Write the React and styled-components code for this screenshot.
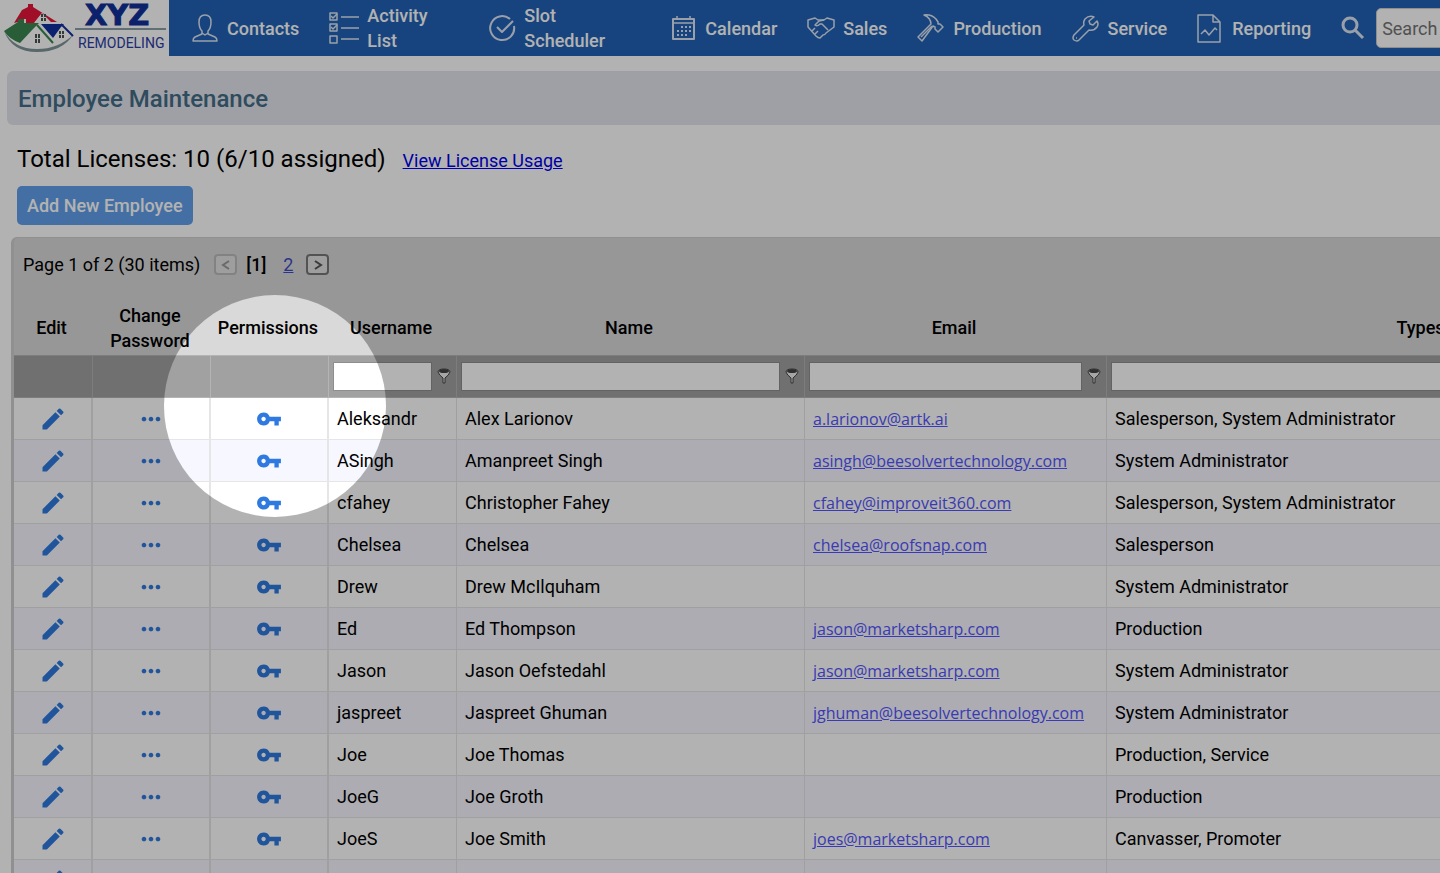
import React from 'react';
import styled, {createGlobalStyle} from 'styled-components';
//icons
import {MdEdit, MdMoreHoriz, MdVpnKey} from 'react-icons/md';

const employees = [
    {username: 'Aleksandr', name: 'Alex Larionov', email: 'a.larionov@artk.ai', types: 'Salesperson, System Administrator'},
    {username: 'ASingh', name: 'Amanpreet Singh', email: 'asingh@beesolvertechnology.com', types: 'System Administrator'},
    {username: 'cfahey', name: 'Christopher Fahey', email: 'cfahey@improveit360.com', types: 'Salesperson, System Administrator'},
    {username: 'Chelsea', name: 'Chelsea', email: 'chelsea@roofsnap.com', types: 'Salesperson'},
    {username: 'Drew', name: 'Drew McIlquham', email: '', types: 'System Administrator'},
    {username: 'Ed', name: 'Ed Thompson', email: 'jason@marketsharp.com', types: 'Production'},
    {username: 'Jason', name: 'Jason Oefstedahl', email: 'jason@marketsharp.com', types: 'System Administrator'},
    {username: 'jaspreet', name: 'Jaspreet Ghuman', email: 'jghuman@beesolvertechnology.com', types: 'System Administrator'},
    {username: 'Joe', name: 'Joe Thomas', email: '', types: 'Production, Service'},
    {username: 'JoeG', name: 'Joe Groth', email: '', types: 'Production'},
    {username: 'JoeS', name: 'Joe Smith', email: 'joes@marketsharp.com', types: 'Canvasser, Promoter'},
    {username: '', name: '', email: '', types: ''},
];

const columns = [
    {title: 'Edit', width: 79},
    {title: 'Change Password', width: 118},
    {title: 'Permissions', width: 118},
    {title: 'Username', width: 128, filter: true},
    {title: 'Name', width: 348, filter: true},
    {title: 'Email', width: 302, filter: true},
    {title: 'Types', filter: true},
];

const Logo = () => (
    <LogoLink href="#home" aria-label="XYZ Remodeling">
        <svg width="168" height="56" viewBox="0 0 168 56">
            <path d="M4 31 Q14 49 37 49 Q58 49 73 35 Q62 52 37 52 Q12 52 4 31Z" fill="#7f9599" />
            <path d="M14 23 L22 10 L28 7 V4 H33 V7 L57 22 H51 L42 13 L34 23 H26 V19 H18 V22Z" fill="#e6153a" />
            <path d="M35 22 L42 13 L50 22Z" fill="#fff" />
            <path d="M4 31 L18 22 V19 H24 V23 H39 L33 29 L20 43 Q9 39 4 31Z" fill="#3a8650" />
            <path d="M22 43 L37 27 L51 44 Q35 49 22 43Z" fill="#fff" />
            <path d="M37 25 L53 43" stroke="#3a8650" strokeWidth="2" />
            <path d="M41 24 H64 L61 27 L53 38Z" fill="#1030a0" />
            <path d="M54 39 L62 28 L70 35 Q63 40 56 42Z" fill="#fff" />
            <path d="M61 24 L73 36" stroke="#1030a0" strokeWidth="2" />
            <path d="M41 14h2v3h-2zM44 14h2v3h-2zM41 18h2v3h-2zM44 18h2v3h-2zM35 34h2v4h-2zM38 34h2v4h-2zM35 39h2v4h-2zM38 39h2v4h-2zM59 31h2v3h-2zM62 31h2v3h-2zM59 35h2v3h-2zM62 35h2v3h-2z" fill="#4a5450" />
            <text x="85" y="25" fontFamily="'DejaVu Sans', sans-serif" fontSize="29" fontWeight="700" fill="#10309a" stroke="#10309a">XYZ</text>
            <path d="M75 29 H166" stroke="#8aa0a8" strokeWidth="2" />
            <text x="78" y="48" fontFamily="Roboto, sans-serif" fontSize="14" fontWeight="400" fill="#2b3da6">REMODELING</text>
        </svg>
    </LogoLink>
);

const ContactIcon = () => (
    <Icon width="26" height="28" viewBox="0 0 26 28">
        <path d="M13 1 C9 1 7 4 7 8 C7 12 8 15 10 17 V20 L3 23 Q1 24 1 27 H25 Q25 24 23 23 L16 20 V17 C18 15 19 12 19 8 C19 4 17 1 13 1Z" />
        <path d="M10 19 L13 21 L16 19" />
    </Icon>
);

const ActivityIcon = () => (
    <Icon width="30" height="32" viewBox="0 0 30 32">
        <path d="M1 1h7v7H1zM1 12h7v7H1zM1 24h7v7H1zM12 5h18M12 16h18M12 27h18" />
        <path d="M2 4l2 2 4-4M2 15l2 2 4-4" />
    </Icon>
);

const SlotIcon = () => (
    <Icon width="27" height="28" viewBox="0 0 27 28" $stroke={2}>
        <path d="M21 5 A12 12 0 1 0 25 12" />
        <path d="M8 13 L13 18 L24 7" />
    </Icon>
);

const CalendarIcon = () => (
    <Icon width="23" height="24" viewBox="0 0 23 24">
        <path d="M1 3h21v20H1z" strokeWidth="2" />
        <path d="M1 7h21M5 0v4M18 0v4" />
        <path d="M9 11h10M5 15h14M5 19h10" strokeWidth="2" strokeDasharray="2 2" />
    </Icon>
);

const SalesIcon = () => (
    <Icon width="28" height="22" viewBox="0 0 28 22">
        <path d="M1 3 L8 1 L11 3 H17 L20 1 L27 3 V10 L19 16 Q18 18 16 18 L13 21 Q11 21 9 19 L1 10Z" />
        <path d="M17 3 L12 4 L8 8 Q10 10 13 7 L15 7 L21 13 M5 14 L8 11 M8 17 L11 14" />
    </Icon>
);

const HammerIcon = () => (
    <Icon width="27" height="28" viewBox="0 0 27 28">
        <path d="M7 1 Q14 0 19 5 L21 8 V10 L23 10 L26 13 L21 18 L18 15 L18 13 L16 12 L5 27 L1 23 L14 10 Q14 4 7 1Z" />
        <path d="M4 23 L15 12" />
    </Icon>
);

const WrenchIcon = () => (
    <Icon width="27" height="27" viewBox="0 0 27 27">
        <path d="M22 2 Q17 0 13 4 Q11 7 12 10 L2 20 Q0 23 2 25 Q5 27 7 25 L17 15 Q22 16 25 12 Q27 9 25 6 L21 10 L18 9 L17 6Z" />
        <path d="M4 23h1" />
    </Icon>
);

const ReportIcon = () => (
    <Icon width="24" height="29" viewBox="0 0 24 29">
        <path d="M1 1h15l7 7v20H1zM16 1v7h7" />
        <path d="M4 20l4-4 4 5 6-7 2 2" />
    </Icon>
);

const SearchIcon = () => (
    <Icon width="24" height="24" viewBox="0 0 24 24" $stroke={3}>
        <circle cx="9" cy="9" r="7" />
        <path d="M14 14l8 8" />
    </Icon>
);

const FunnelIcon = () => (
    <svg width="14" height="18" viewBox="0 0 14 18">
        <path d="M1 4 Q1 1 7 1 Q13 1 13 4 Q12 7 8 10 V15 H6 V10 Q2 7 1 4Z" fill="#eee" stroke="#444" />
        <ellipse cx="7" cy="3" rx="5" ry="2" fill="#444" />
    </svg>
);

const navItems = [
    {label: 'Contacts', icon: <ContactIcon />, space: 9},
    {label: 'Activity List', icon: <ActivityIcon />, width: 92},
    {label: 'Slot Scheduler', icon: <SlotIcon />, width: 118},
    {label: 'Calendar', icon: <CalendarIcon />, space: 10},
    {label: 'Sales', icon: <SalesIcon />},
    {label: 'Production', icon: <HammerIcon />, space: 9},
    {label: 'Service', icon: <WrenchIcon />, space: 9},
    {label: 'Reporting', icon: <ReportIcon />, space: 11},
];

const App = () => {
    return (
        <Page>
            <GlobalStyle />
            <Header>
                <Logo />
                <Nav>
                    {navItems.map(item => (
                        <NavLink href="#nav" key={item.label} $space={item.space}>
                            {item.icon}
                            <NavLabel $width={item.width}>{item.label}</NavLabel>
                        </NavLink>
                    ))}
                    <Search>
                        <SearchIcon />
                        <SearchInput type="text" placeholder="Search" aria-label="Search" />
                    </Search>
                </Nav>
            </Header>

            <TitleBar>
                <h1>Employee Maintenance</h1>
            </TitleBar>

            <Licenses>
                <p>Total Licenses: 10 (6/10 assigned)</p>
                <a href="#usage">View License Usage</a>
            </Licenses>
            <AddButton type="button">Add New Employee</AddButton>

            <Grid>
                <Pager>
                    <span>Page 1 of 2 (30 items)</span>
                    <PageButton type="button" aria-label="Previous page" disabled>
                        <svg width="10" height="12" viewBox="0 0 10 12"><path d="M8 2L2 6l6 4" /></svg>
                    </PageButton>
                    <b>[1]</b>
                    <a href="#page2">2</a>
                    <PageButton type="button" aria-label="Next page">
                        <svg width="10" height="12" viewBox="0 0 10 12"><path d="M2 2l6 4-6 4" /></svg>
                    </PageButton>
                </Pager>
                <Table>
                    <colgroup>
                        {columns.map(column => <col key={column.title} width={column.width} />)}
                    </colgroup>
                    <thead>
                        <tr>
                            {columns.map(column => <HeadCell key={column.title}>{column.title}</HeadCell>)}
                        </tr>
                        <tr>
                            {columns.map(column => (
                                <FilterCell key={column.title}>
                                    {column.filter && (
                                        <Filter>
                                            <input type="text" aria-label={`Filter ${column.title}`} />
                                            <FunnelIcon />
                                        </Filter>
                                    )}
                                </FilterCell>
                            ))}
                        </tr>
                    </thead>
                    <tbody>
                        {employees.map((employee, index) => (
                            <Row key={index}>
                                <IconCell>
                                    <IconButton type="button" aria-label="Edit"><MdEdit size={28} /></IconButton>
                                </IconCell>
                                <IconCell>
                                    <IconButton type="button" aria-label="Change password"><MdMoreHoriz size={28} /></IconButton>
                                </IconCell>
                                <IconCell>
                                    <IconButton type="button" aria-label="Permissions"><MdVpnKey size={26} /></IconButton>
                                </IconCell>
                                <Cell>{employee.username}</Cell>
                                <Cell>{employee.name}</Cell>
                                <Cell>
                                    {employee.email && <a href={`mailto:${employee.email}`}>{employee.email}</a>}
                                </Cell>
                                <Cell>{employee.types}</Cell>
                            </Row>
                        ))}
                    </tbody>
                </Table>
            </Grid>
            <Spotlight />
        </Page>
    );
};

const GlobalStyle = createGlobalStyle`
    * {
        box-sizing: border-box;
    }

    body {
        margin: 0;
        background: #fff;
        color: #000;
        font-family: Roboto, sans-serif;
        font-size: 18px;
        line-height: 25px;
    }

    input, button {
        font: inherit;
    }
`;

const Page = styled.div`
    position: relative;
    height: 100vh;
    overflow: hidden;
`;

const Header = styled.header`
    display: flex;
    height: 56px;
`;

const LogoLink = styled.a`
    flex: none;
    width: 169px;
    svg {
        display: block;
    }
`;

const Nav = styled.nav`
    flex: 1;
    display: flex;
    align-items: center;
    gap: 30px;
    padding-left: 23px;
    background: #2262b6;
    min-width: 0;
`;

const NavLink = styled.a`
    flex: none;
    display: flex;
    align-items: center;
    gap: ${props => props.$space || 8}px;
    color: #fff;
    font-weight: 500;
    text-decoration: none;
`;

const NavLabel = styled.span`
    width: ${props => props.$width ? `${props.$width}px` : 'auto'};
    padding-right: ${props => props.$width ? 30 : 0}px;
`;

const Icon = styled.svg`
    flex: none;
    fill: none;
    stroke: #dde6f2;
    stroke-width: ${props => props.$stroke || 1.5};
    stroke-linejoin: round;
`;

const Search = styled.div`
    flex: none;
    display: flex;
    align-items: center;
    gap: 11px;
`;

const SearchInput = styled.input`
    width: 240px;
    height: 40px;
    padding: 0 5px;
    border: 1px solid #ccc;
    border-radius: 5px;
    background: #fff;
    &::placeholder {
        color: #757575;
        opacity: 1;
    }
`;

const TitleBar = styled.div`
    margin: 15px 0 0 7px;
    padding: 13px 11px 11px;
    border-radius: 6px 0 0 6px;
    background: #e4e4ee;
    h1 {
        margin: 0;
        color: #436d86;
        font-size: 24px;
        font-weight: 500;
        line-height: 30px;
    }
`;

const Licenses = styled.div`
    display: flex;
    align-items: baseline;
    gap: 17px;
    margin: 19px 0 12px 17px;
    p {
        margin: 0;
        font-size: 24px;
        line-height: 30px;
    }
    a {
        color: #0000ee;
    }
`;

const AddButton = styled.button`
    display: block;
    height: 39px;
    margin-left: 17px;
    padding: 0 10px;
    border: none;
    border-radius: 5px;
    background: #629fec;
    color: #fff;
    font-weight: 500;
`;

const Grid = styled.section`
    min-width: 1728px;
    margin: 12px 0 0 11px;
    border: 1px solid #cfcfcf;
    border-left: 3px solid #cfcfcf;
    border-radius: 6px 0 0 0;
    background: #d9d9d9;
`;

const Pager = styled.div`
    display: flex;
    align-items: center;
    padding: 14px 9px;
    b {
        margin-left: 9px;
        font-weight: 500;
    }
    a {
        margin: 0 13px 0 17px;
        color: #3c4cc8;
    }
`;

const PageButton = styled.button`
    display: flex;
    align-items: center;
    justify-content: center;
    width: 23px;
    height: 21px;
    margin: 0;
    padding: 0;
    border: 2px solid #777;
    border-radius: 4px;
    background: #e2e2e2;
    svg {
        fill: none;
        stroke: #555;
        stroke-width: 2;
    }
    &:disabled {
        margin-left: 14px;
        border-color: #bbb;
        svg {
            stroke: #999;
        }
    }
`;

const Table = styled.table`
    width: 100%;
    table-layout: fixed;
    border-collapse: separate;
    border-spacing: 0;
`;

const HeadCell = styled.th`
    height: 64px;
    padding: 11px 6px 2px 2px;
    font-weight: 500;
`;

const FilterCell = styled.td`
    height: 43px;
    padding: 0 5px 0 4px;
    border-top: 1px solid #b4b4b4;
    border-right: 1px solid #b4b4b4;
    border-bottom: 1px solid #b4b4b4;
    background: #a1a1a1;
`;

const Filter = styled.div`
    display: flex;
    align-items: center;
    gap: 5px;
    input {
        flex: 1;
        min-width: 0;
        height: 29px;
        border: 1px solid #8e8e8e;
        background: #fff;
    }
`;

const Cell = styled.td`
    height: 42px;
    padding: 0 8px;
    border-right: 1px solid #e6e6e6;
    border-bottom: 1px solid #e6e6e6;
    a {
        color: #5454ff;
        font-family: "Open Sans", sans-serif;
        font-size: 16px;
    }
`;

const IconCell = styled(Cell)`
    border-right-width: 2px;
`;

const Row = styled.tr`
    background: #fff;
    &:nth-child(even) {
        background: #f6f7ff;
    }
`;

const IconButton = styled.button`
    display: flex;
    margin: 0 auto;
    padding: 0;
    border: none;
    background: none;
    color: #2f7ae0;
`;

// dims the whole page apart from the circle round the permission keys
const Spotlight = styled.div`
    position: absolute;
    left: 164px;
    top: 295px;
    width: 222px;
    height: 222px;
    border-radius: 50%;
    box-shadow: 0 0 0 2400px rgba(0, 0, 0, 0.3);
    pointer-events: none;
`;

export default App;
